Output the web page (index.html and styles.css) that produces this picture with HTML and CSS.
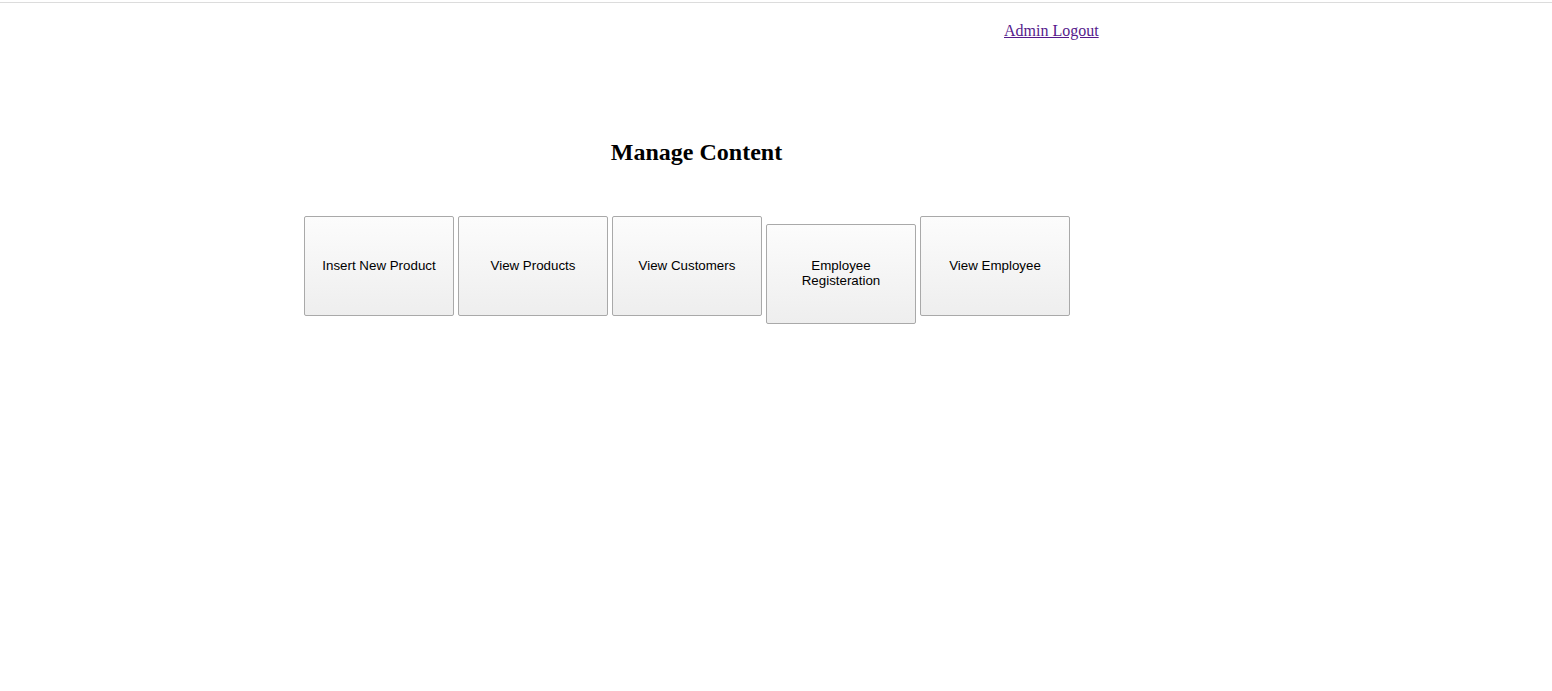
FILE: index.html
```html
<!DOCTYPE html>
<html>
<head>
<meta charset="utf-8">
<title>Manage Content</title>
<link rel="stylesheet" href="styles.css">
</head>
<body>
<div class="topline"></div>
<div class="header">
  <a class="logout" href="#">Admin Logout</a>
</div>
<div class="content">
  <h2 class="title">Manage Content</h2>
  <div class="buttons">
    <button class="btn">Insert New Product</button>
    <button class="btn">View Products</button>
    <button class="btn">View Customers</button>
    <button class="btn">Employee Registeration</button>
    <button class="btn">View Employee</button>
  </div>
</div>
</body>
</html>
```
FILE: styles.css
```css
html, body {
  margin: 0;
  padding: 0;
  background: #fff;
}
body {
  font-family: "Liberation Serif", "Times New Roman", serif;
  font-size: 16px;
  color: #000;
}
.topline {
  margin-top: 2px;
  border-top: 1px solid #dcdcdc;
}
.header {
  padding-top: 19px;
  padding-left: 1004px;
  line-height: 18px;
}
.logout {
  color: #551a8b;
  text-decoration: underline;
}
.content {
  margin-left: 304px;
  width: 785px;
}
.title {
  margin: 98px 0 0 0;
  text-align: center;
  font-size: 24px;
  font-weight: bold;
  line-height: 28px;
}
.buttons {
  margin-top: 50px;
  display: flex;
  align-items: first baseline;
  gap: 4px;
}
.btn {
  flex: none;
  width: 150px;
  height: 100px;
  margin: 0;
  padding: 0 6px 2px;
  line-height: 15px;
  font-family: "Liberation Sans", Arial, sans-serif;
  font-size: 13.333px;
  color: #000;
  border: 1px solid #a9a9a9;
  border-radius: 2px;
  background: linear-gradient(#fcfcfc, #eeeeee);
}
```
